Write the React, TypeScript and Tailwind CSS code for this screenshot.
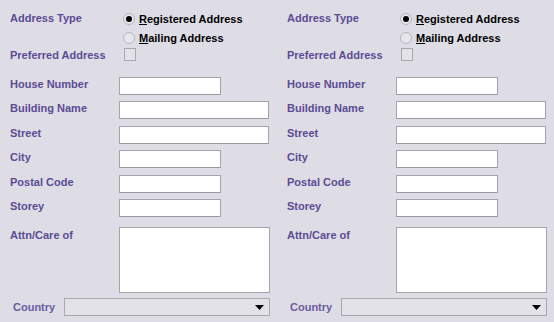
import React from 'react';

const labelCls = 'text-[11px] font-bold text-[#5c4b94] leading-[14px] whitespace-nowrap';
const fieldCls = 'h-[18px] bg-white border border-[#a4a4ac] border-b-[#9a9aa2]';

function Radio({ checked, label, u }: { checked?: boolean; label: string; u: string }) {
  return (
    <div className="flex items-center h-[19px]">
      <div className="w-[12px] h-[12px] rounded-full border border-[#b4b4bc] bg-[#e6e6ec] flex items-center justify-center">
        {checked && <div className="w-[6px] h-[6px] rounded-full bg-black" />}
      </div>
      <span className="ml-[4px] text-[11px] font-bold text-black leading-[14px] whitespace-nowrap">
        <span className="underline underline-offset-[1px]">{u}</span>
        {label}
      </span>
    </div>
  );
}

function FieldRow({ label, wide, mt }: { label: string; wide?: boolean; mt: string }) {
  return (
    <div className={`flex items-start ${mt}`}>
      <div className={`${labelCls} w-[109px]`}>{label}</div>
      <div className={`${fieldCls} ${wide ? 'w-[150px]' : 'w-[102px]'}`} />
    </div>
  );
}

function AddressPanel() {
  return (
    <div className="w-[277px] pl-[10px] pt-[9px]">
      <div className="flex">
        <div className={`${labelCls} w-[113px] pt-[2px]`}>Address Type</div>
        <div className="flex flex-col">
          <Radio checked u="R" label="egistered Address" />
          <Radio u="M" label="ailing Address" />
        </div>
      </div>
      <div className="flex items-center h-[15px]">
        <div className={`${labelCls} w-[114px]`}>Preferred Address</div>
        <div className="w-[12px] h-[13px] border border-[#a8a8b0] bg-[#e2e2e8]" />
      </div>
      <FieldRow label="House Number" mt="mt-[15px]" />
      <FieldRow label="Building Name" wide mt="mt-[6px]" />
      <FieldRow label="Street" wide mt="mt-[7px]" />
      <FieldRow label="City" mt="mt-[6px]" />
      <FieldRow label="Postal Code" mt="mt-[7px]" />
      <FieldRow label="Storey" mt="mt-[6px]" />
      <div className="flex items-start mt-[10px]">
        <div className={`${labelCls} w-[109px] pt-[1px]`}>Attn/Care of</div>
        <div className="w-[151px] h-[66px] bg-white border border-[#a4a4ac]" />
      </div>
      <div className="flex items-center mt-[5px]">
        <div className={`${labelCls} w-[54px] pl-[3px] text-[#6a5ca0]`}>Country</div>
        <div className="w-[206px] h-[18px] border border-[#a8a8b0] bg-[#e2e2e8] flex items-center justify-end pr-[5px]">
          <svg width="9" height="5" viewBox="0 0 9 5">
            <path d="M0 0 H9 L4.5 5 Z" fill="#000" />
          </svg>
        </div>
      </div>
    </div>
  );
}

export default function App() {
  return (
    <div
      className="w-[554px] h-[322px] bg-[#dedde5] flex overflow-hidden"
      style={{ fontFamily: '"Liberation Sans", Arial, sans-serif' }}
    >
      <AddressPanel />
      <AddressPanel />
    </div>
  );
}
